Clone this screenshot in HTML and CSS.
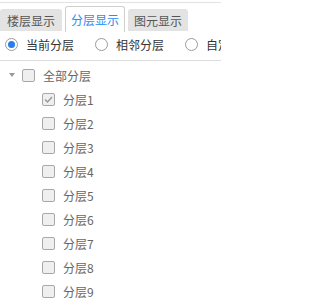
FILE: index.html
```html
<!DOCTYPE html>
<html lang="zh">
<head>
<meta charset="utf-8">
<link rel="stylesheet" href="styles.css">
</head>
<body>
<div class="tabs">
  <div class="tab">楼层显示</div>
  <div class="tab active">分层显示</div>
  <div class="tab">图元显示</div>
</div>
<div class="radios">
  <label class="radio"><span class="dot on"></span><span class="rl">当前分层</span></label>
  <label class="radio"><span class="dot"></span><span class="rl">相邻分层</span></label>
  <label class="radio"><span class="dot"></span><span class="rl">自定义分层</span></label>
</div>
<div class="tree">
  <div class="row parent"><span class="caret"></span><span class="cb"></span><span class="txt">全部分层</span></div>
  <div class="row child"><span class="cb"><svg width="11" height="11" viewBox="0 0 11 11"><polyline points="2,5.5 4.5,8 9,3" fill="none" stroke="#9a9a9a" stroke-width="1.5"/></svg></span><span class="txt">分层1</span></div>
  <div class="row child"><span class="cb"></span><span class="txt">分层2</span></div>
  <div class="row child"><span class="cb"></span><span class="txt">分层3</span></div>
  <div class="row child"><span class="cb"></span><span class="txt">分层4</span></div>
  <div class="row child"><span class="cb"></span><span class="txt">分层5</span></div>
  <div class="row child"><span class="cb"></span><span class="txt">分层6</span></div>
  <div class="row child"><span class="cb"></span><span class="txt">分层7</span></div>
  <div class="row child"><span class="cb"></span><span class="txt">分层8</span></div>
  <div class="row child"><span class="cb"></span><span class="txt">分层9</span></div>
</div>
</body>
</html>
```
FILE: styles.css
```css
html, body {
  margin: 0;
  padding: 0;
  background: #fff;
  overflow: hidden;
}
body {
  width: 221px;
  height: 304px;
  padding-top: 2px;
  box-sizing: border-box;
  font-family: "Noto Sans CJK SC", "Microsoft YaHei", sans-serif;
  font-size: 12px;
}
.tabs {
  border-top: 1px solid #e2e2e2;
  display: flex;
  align-items: flex-end;
  gap: 3px;
  padding-top: 4px;
  height: 25px;
}
.tab {
  width: 62px;
  height: 22px;
  margin-bottom: 1px;
  box-sizing: border-box;
  background: #e3e3e3;
  color: #555;
  border-radius: 3px 3px 0 0;
  display: flex;
  align-items: center;
  justify-content: center;
  white-space: nowrap;
}
.tab.active {
  width: 60px;
  height: 26px;
  margin-bottom: 0;
  background: #fff;
  color: #2d8cf0;
  border: 1px solid #cfcfcf;
  border-bottom: none;
}
.tab:last-child {
  width: 60px;
}
.radios {
  height: 24px;
  padding-bottom: 4px;
  border-bottom: 1px solid #dcdcdc;
  display: flex;
  align-items: center;
  padding-left: 5px;
  gap: 21px;
  white-space: nowrap;
  color: #333;
}
.radio {
  display: flex;
  align-items: center;
  gap: 8px;
}
.dot {
  width: 13px;
  height: 13px;
  box-sizing: border-box;
  border: 1px solid #9a9a9a;
  border-radius: 50%;
  background: #fff;
  display: flex;
  align-items: center;
  justify-content: center;
  flex: none;
}
.dot.on::after {
  content: "";
  width: 7px;
  height: 7px;
  border-radius: 50%;
  background: #2b7de9;
}
.tree {
  padding-top: 2px;
  color: #666;
}
.row {
  height: 24px;
  display: flex;
  align-items: center;
}
.parent {
  padding-left: 9px;
}
.child {
  padding-left: 42px;
}
.caret {
  width: 0;
  height: 0;
  border-left: 3px solid transparent;
  border-right: 3px solid transparent;
  border-top: 4px solid #999;
  margin-right: 7px;
}
.cb {
  width: 13px;
  height: 13px;
  box-sizing: border-box;
  border: 1px solid #a8a8a8;
  border-radius: 2px;
  background: #efefef;
  display: flex;
  align-items: center;
  justify-content: center;
  flex: none;
}
.cb svg {
  display: block;
}
.txt {
  margin-left: 8px;
  white-space: nowrap;
}
```
